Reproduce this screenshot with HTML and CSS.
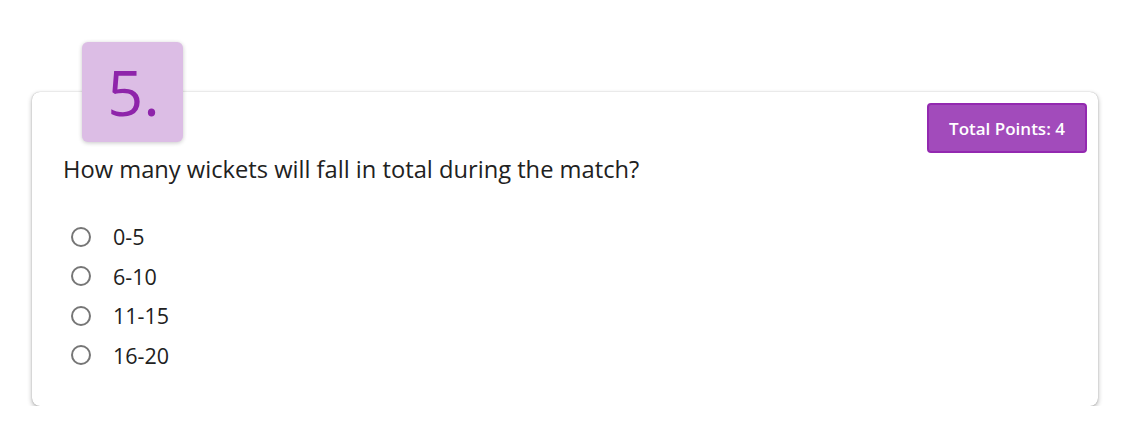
FILE: index.html
```html
<!DOCTYPE html>
<html>
<head>
<meta charset="utf-8">
<link rel="stylesheet" href="styles.css">
</head>
<body>
<div class="page">
  <div class="card">
    <div class="badge">5.</div>
    <div class="card-head">
      <div class="points">Total Points: 4</div>
    </div>
    <div class="question">How many wickets will fall in total during the match?</div>
    <ul class="options">
      <li class="option"><span class="radio"></span><span class="label">0-5</span></li>
      <li class="option"><span class="radio"></span><span class="label">6-10</span></li>
      <li class="option"><span class="radio"></span><span class="label">11-15</span></li>
      <li class="option"><span class="radio"></span><span class="label">16-20</span></li>
    </ul>
  </div>
</div>
</body>
</html>
```
FILE: styles.css
```css
html, body {
  margin: 0;
  padding: 0;
  background: #ffffff;
}
body {
  font-family: "Open Sans", "Noto Sans", sans-serif;
  color: #212121;
}
.page {
  padding: 92px 42px 0 32px;
}
.card {
  position: relative;
  width: 1066px;
  height: 314px;
  box-sizing: border-box;
  background: #fff;
  border-radius: 8px;
  box-shadow: 0 0 1px rgba(0,0,0,0.35), 0 2px 5px rgba(0,0,0,0.3);
  padding: 11px 11px 0 31px;
}
.badge {
  position: absolute;
  left: 50px;
  top: -50px;
  width: 101px;
  height: 100px;
  background: #dcbde5;
  border-radius: 6px;
  box-shadow: 0 1px 4px rgba(0,0,0,0.22);
  color: #8e24aa;
  font-size: 63px;
  font-weight: 500;
  line-height: 100px;
  text-align: center;
  box-sizing: border-box;
  padding-left: 2px;
}
.card-head {
  display: flex;
  justify-content: flex-end;
}
.points {
  width: 160px;
  height: 50px;
  box-sizing: border-box;
  background: #a24bbb;
  border: 2px solid #9329b0;
  border-radius: 4px;
  color: #fff;
  font-size: 17px;
  font-weight: 600;
  display: flex;
  align-items: center;
  justify-content: center;
}
.question {
  font-size: 23.7px;
  line-height: 30px;
  margin-top: 1px;
}
.options {
  list-style: none;
  margin: 33px 0 0 0;
  padding: 0;
}
.option {
  display: flex;
  align-items: center;
  height: 39.5px;
  font-size: 21.5px;
}
.radio {
  width: 16px;
  height: 16px;
  border: 2px solid #767676;
  border-radius: 50%;
  margin-left: 8px;
  margin-right: 22px;
}
.label {
  color: #212121;
}
```
